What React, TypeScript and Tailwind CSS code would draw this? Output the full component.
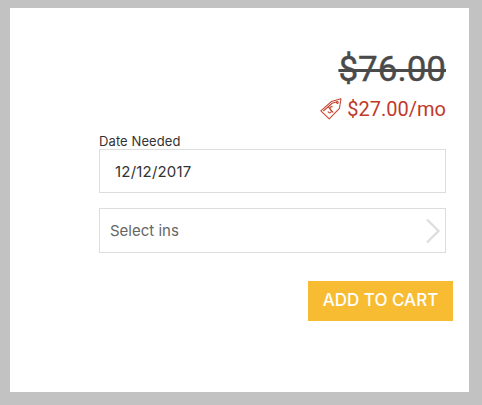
export default function App() {
  return (
    <div className="w-[482px] h-[405px] bg-[#c2c2c2] pt-[8px] pl-[10px] overflow-hidden" style={{ fontFamily: "Roboto, sans-serif" }}>
      <div className="w-[459px] h-[384px] bg-white flex flex-col items-end pt-[39px]">
        <div className="mr-[23px] text-[35px] leading-[46px] text-[#4a4a4a] line-through decoration-[3px] [-webkit-text-stroke:0.4px_#4a4a4a]">$76.00</div>
        <div className="mr-[23px] mt-[4px] flex items-center gap-[5px] h-[24px]">
          <svg width="22" height="22" viewBox="0 0 21 21" fill="none" stroke="#c9442f" strokeWidth="1" strokeLinejoin="round">
            <path d="M0.8 12.2 L10.8 3.4 L20 0.8 L18.6 9.8 L8.8 20 Z" />
            <circle cx="16.6" cy="4.4" r="0.9" />
            <path d="M3.2 12.4 L11.6 5 L17 3.4" />
            <path d="M12 8.6 C10.6 7.6 8.6 9.4 9.8 10.8 C10.8 11.8 11.6 12.4 10.4 13.8 C9.2 14.8 7.8 13.6 7.6 12.8" />
            <path d="M8 8.4 L12.6 14" />
          </svg>
          <span className="text-[20px] leading-[24px] text-[#c0392b]">$27.00/mo</span>
        </div>
        <div className="w-[347px] mr-[23px] mt-[14px] flex flex-col">
          <label className="text-[13px] leading-[14px] text-[#333333] font-['Inter',sans-serif] tracking-[0.1px] -mt-[1px] mb-[1px]">Date Needed</label>
          <div className="h-[44px] border border-[#dddddd] pl-[15px] pt-[2px] flex items-center text-[15px] text-[#333333] font-['Inter',sans-serif] tracking-[0.2px]">12/12/2017</div>
          <div className="h-[45px] mt-[15px] border border-[#dddddd] pl-[10px] pr-[4px] flex items-center justify-between text-[15px] text-[#666666] font-['Inter',sans-serif]">
            <span className="pt-[2px]">Select ins</span>
            <svg width="16" height="26" viewBox="0 0 16 26" fill="none" stroke="#dedede" strokeWidth="2.4">
              <path d="M2 1.5 L13.5 13 L2 24.5" />
            </svg>
          </div>
        </div>
        <button className="w-[145px] h-[40px] mt-[28px] mr-[16px] bg-[#f8bc33] text-white text-[17px] font-medium font-['Inter',sans-serif] flex items-center justify-center">ADD TO CART</button>
      </div>
    </div>
  );
}
